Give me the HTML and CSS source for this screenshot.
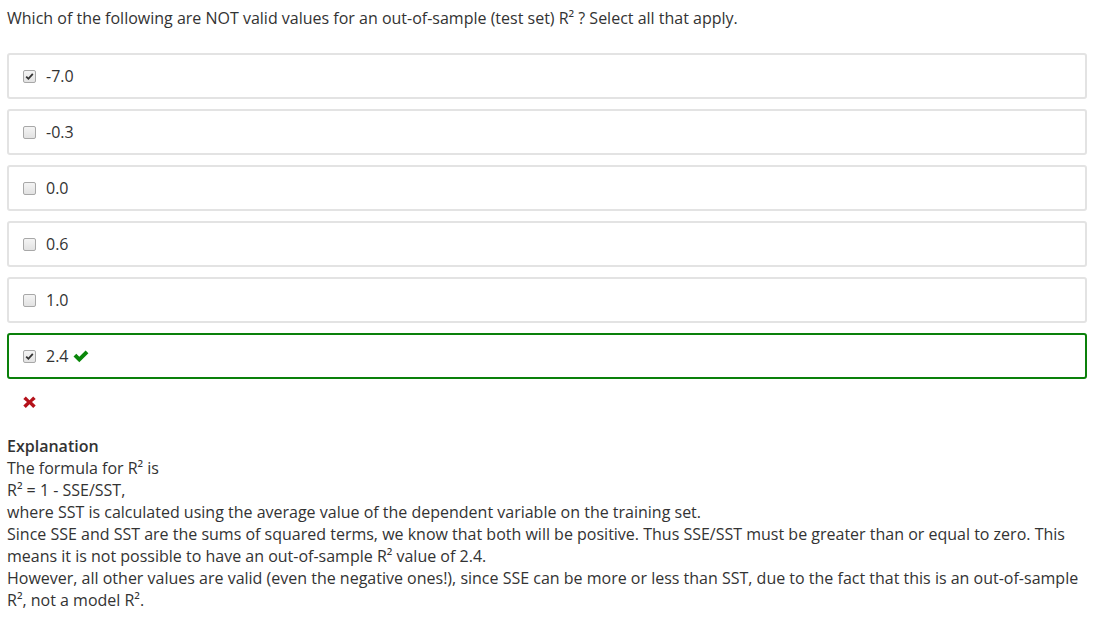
FILE: index.html
```html
<!DOCTYPE html>
<html>
<head>
<meta charset="utf-8">
<link rel="stylesheet" href="styles.css">
</head>
<body>
<div class="quiz">
  <p class="question">Which of the following are NOT valid values for an out-of-sample (test set) R² ? Select all that apply.</p>
  <div class="options">
    <label class="option">
      <span class="cb checked"><svg viewBox="0 0 13 13" width="13" height="13"><path d="M3.2 6.6 L5.4 8.8 L9.8 3.8" fill="none" stroke="#333" stroke-width="1.8"/></svg></span>
      <span class="val">-7.0</span>
    </label>
    <label class="option">
      <span class="cb"></span>
      <span class="val">-0.3</span>
    </label>
    <label class="option">
      <span class="cb"></span>
      <span class="val">0.0</span>
    </label>
    <label class="option">
      <span class="cb"></span>
      <span class="val">0.6</span>
    </label>
    <label class="option">
      <span class="cb"></span>
      <span class="val">1.0</span>
    </label>
    <label class="option correct">
      <span class="cb checked"><svg viewBox="0 0 13 13" width="13" height="13"><path d="M3.2 6.6 L5.4 8.8 L9.8 3.8" fill="none" stroke="#333" stroke-width="1.8"/></svg></span>
      <span class="val">2.4</span>
      <svg class="ok" viewBox="0 0 16 14" width="16" height="14"><path d="M0.5 7.6 L3.3 4.8 L6.3 7.8 L12.6 1.5 L15.4 4.3 L6.3 13.3 Z" fill="#0a870a"/></svg>
    </label>
  </div>
  <div class="result">
    <svg viewBox="0 0 13 12" width="13" height="12"><path d="M0.3 3 L2.8 0.5 L6.5 4.2 L10.2 0.5 L12.7 3 L9 6 L12.7 9.5 L10.2 12 L6.5 8.3 L2.8 12 L0.3 9.5 L4 6 Z" fill="#b5121b"/></svg>
  </div>
  <div class="explanation">
    <div class="exp-title">Explanation</div>
    <div>The formula for R² is</div>
    <div>R² = 1 - SSE/SST,</div>
    <div>where SST is calculated using the average value of the dependent variable on the training set.</div>
    <div>Since SSE and SST are the sums of squared terms, we know that both will be positive. Thus SSE/SST must be greater than or equal to zero. This means it is not possible to have an out-of-sample R² value of 2.4.</div>
    <div>However, all other values are valid (even the negative ones!), since SSE can be more or less than SST, due to the fact that this is an out-of-sample R², not a model R².</div>
  </div>
</div>
</body>
</html>
```

FILE: styles.css
```css
html, body {
  margin: 0;
  padding: 0;
  background: #fff;
}
body {
  font-family: "Open Sans", "Liberation Sans", sans-serif;
  font-size: 16px;
  line-height: 22px;
  color: #333;
}
.quiz {
  padding: 7px 10px 0 7px;
}
.question {
  margin: 0 0 24px 0;
}
.options {
  display: flex;
  flex-direction: column;
  gap: 10px;
}
.option {
  display: flex;
  align-items: center;
  border: 2px solid #e3e3e3;
  border-radius: 3px;
  padding: 10px 14px;
  height: 22px;
}
.option.correct {
  border-color: #0a800a;
}
.cb {
  width: 11px;
  height: 11px;
  border: 1px solid #a8a8a8;
  border-radius: 2px;
  background: linear-gradient(#f4f4f4, #e2e2e2);
  margin-right: 10px;
  position: relative;
  flex: none;
}
.cb svg {
  position: absolute;
  left: -1px;
  top: -1px;
}
.val {
  color: #333;
}
.ok {
  margin-left: 4px;
}
.result {
  padding: 17px 0 0 16px;
  height: 39px;
}
.result svg {
  display: block;
}
.exp-title {
  font-weight: 600;
}
```
